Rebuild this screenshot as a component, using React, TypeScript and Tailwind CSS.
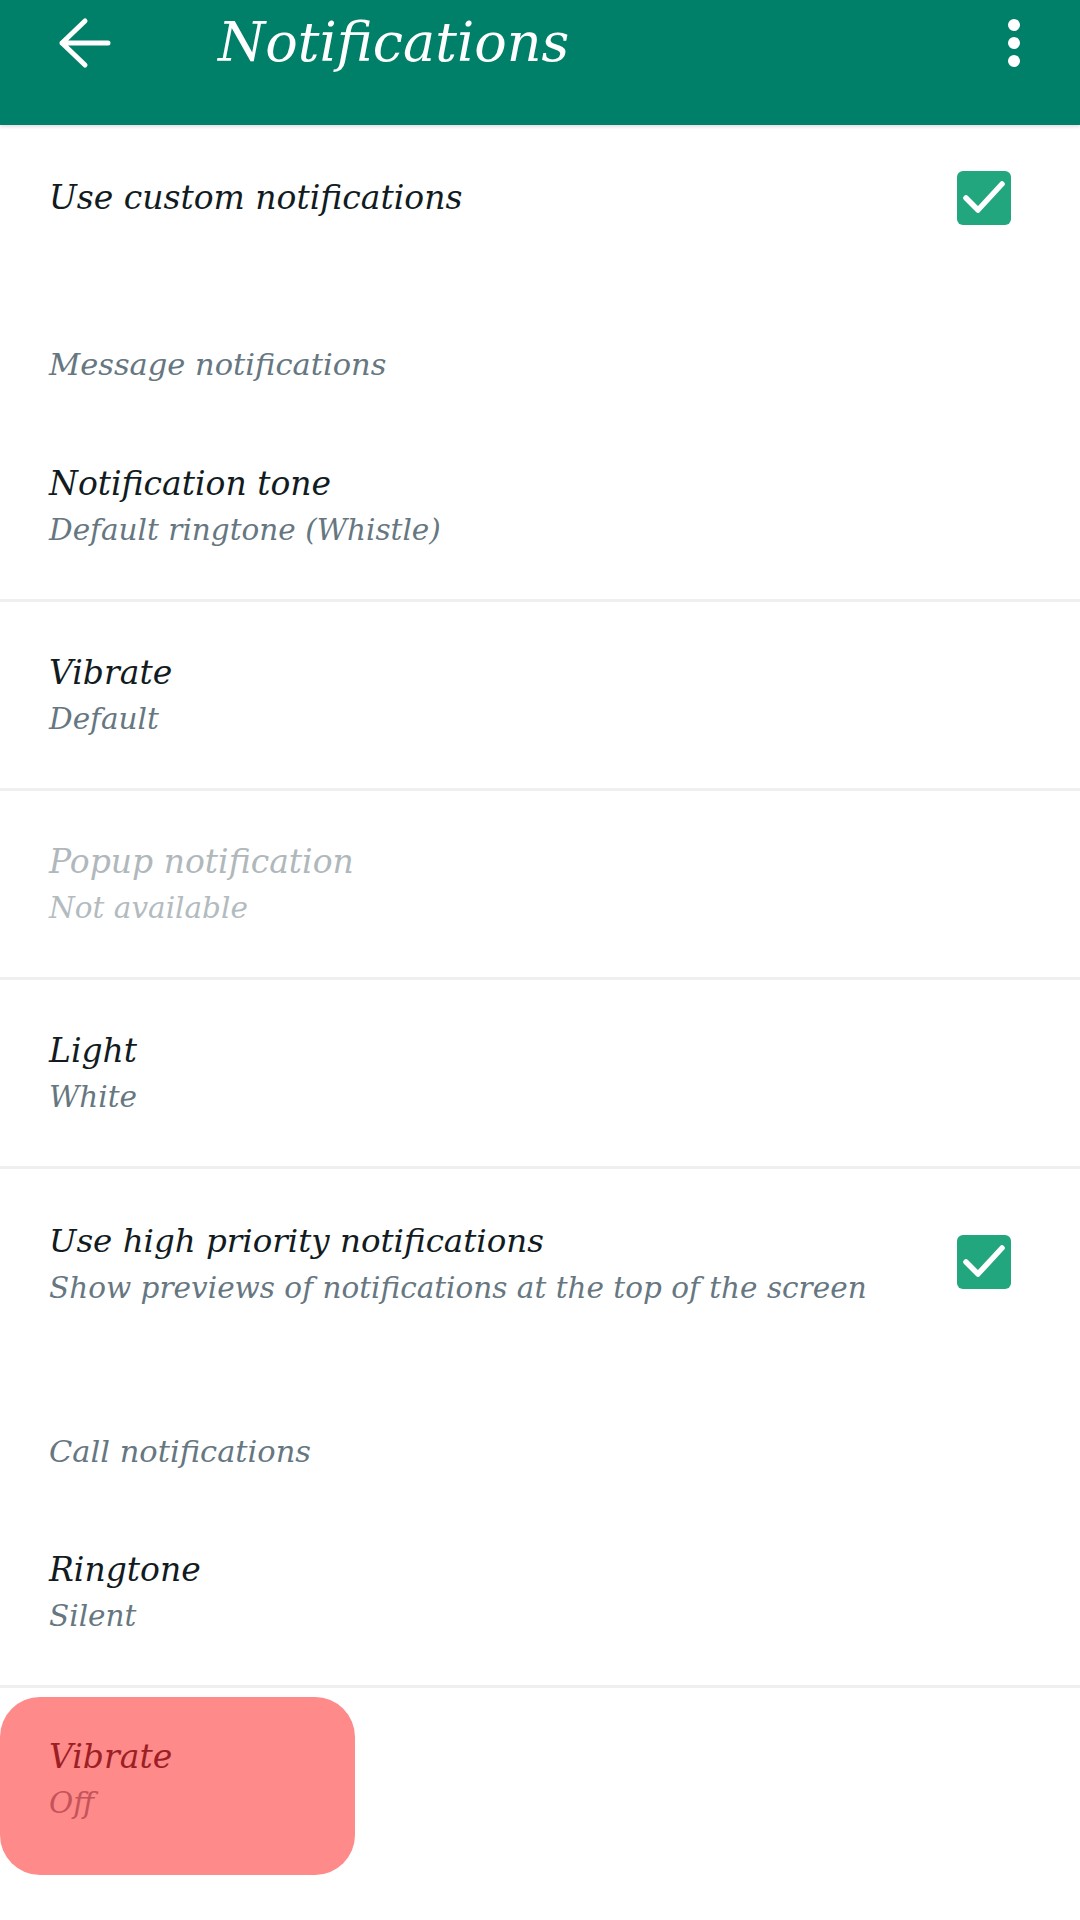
import React from "react";

const serif = "font-['DejaVu_Serif','Noto_Serif',serif] italic";

interface Pref {
    title: string;
    sub: string;
    disabled?: boolean;
}

const toneRows: Pref[] = [
    { title: "Notification tone", sub: "Default ringtone (Whistle)" },
    { title: "Vibrate", sub: "Default" },
    { title: "Popup notification", sub: "Not available", disabled: true },
    { title: "Light", sub: "White" },
];

function CheckBox(): JSX.Element {
    return (
        <div className="w-[54px] h-[54px] rounded-[6px] bg-[#21a67e] flex items-center justify-center">
            <svg width="54" height="54" viewBox="0 0 54 54" fill="none">
                <path d="M9 27 L21 39 L45 13" stroke="#ffffff" strokeWidth="5.5" strokeLinecap="round" strokeLinejoin="round" />
            </svg>
        </div>
    );
}

function Divider(): JSX.Element {
    return <div className="h-[3px] w-full bg-[#eef0f0]" />;
}

function PrefRow({ title, sub, disabled }: Pref): JSX.Element {
    return (
        <div className="h-[186px] pl-[49px] pt-[49px] flex flex-col">
            <div className={`text-[33px] leading-[44px] ${disabled ? "text-[#b0b8bc]" : "text-[#111b21]"}`}>
                {title}
            </div>
            <div className={`mt-[2px] text-[29.5px] leading-[44px] ${disabled ? "text-[#b3bbbf]" : "text-[#667781]"}`}>
                {sub}
            </div>
        </div>
    );
}

export default function App(): JSX.Element {
    return (
        <div className={`w-[1080px] h-[1920px] bg-white overflow-hidden ${serif}`}>
            {/* Toolbar */}
            <div className="h-[125px] bg-[#008069] shadow-[0_2px_3px_rgba(0,0,0,0.12)]">
                <div className="h-[86px] flex items-center">
                    <div className="w-[218px] pl-[56px] flex items-center">
                        <svg width="56" height="54" viewBox="0 0 56 54" fill="none">
                            <path d="M29 5 L6 27 L29 49 M6 27 H52" stroke="#ffffff" strokeWidth="5" strokeLinecap="round" strokeLinejoin="round" />
                        </svg>
                    </div>
                    <div className="flex-1 text-white text-[54px] leading-[64px]">Notifications</div>
                    <div className="w-[67px] flex flex-col items-center gap-[6px] mr-[33px]">
                        <span className="w-[12px] h-[12px] rounded-full bg-white" />
                        <span className="w-[12px] h-[12px] rounded-full bg-white" />
                        <span className="w-[12px] h-[12px] rounded-full bg-white" />
                    </div>
                </div>
            </div>

            {/* Use custom notifications */}
            <div className="h-[165px] pl-[49px] pr-[69px] flex items-start justify-between">
                <div className="pt-[51px] text-[33px] leading-[44px] text-[#111b21]">Use custom notifications</div>
                <div className="pt-[46px]">
                    <CheckBox />
                </div>
            </div>

            {/* Message notifications */}
            <div className="h-[123px] pl-[49px] pt-[53px] text-[30.5px] leading-[44px] text-[#667781]">
                Message notifications
            </div>

            {toneRows.map((r) => (
                <div key={r.title}>
                    <PrefRow {...r} />
                    <Divider />
                </div>
            ))}

            {/* High priority */}
            <div className="h-[207px] pl-[49px] pr-[69px] flex items-start justify-between">
                <div className="pt-[50px] flex flex-col">
                    <div className="text-[32.5px] leading-[44px] text-[#111b21]">Use high priority notifications</div>
                    <div className="mt-[3px] text-[29.5px] leading-[44px] text-[#667781]">
                        Show previews of notifications at the top of the screen
                    </div>
                </div>
                <div className="pt-[66px]">
                    <CheckBox />
                </div>
            </div>

            {/* Call notifications */}
            <div className="h-[123px] pl-[49px] pt-[54px] text-[30.5px] leading-[44px] text-[#667781]">
                Call notifications
            </div>

            <PrefRow title="Ringtone" sub="Silent" />
            <Divider />

            {/* Vibrate (highlighted) */}
            <div className="pt-[9px]">
                <div className="w-[355px] h-[178px] rounded-[40px] bg-[#ff8a8a] pl-[49px] pt-[38px] flex flex-col">
                    <div className="text-[33px] leading-[44px] text-[#9b1f24]">Vibrate</div>
                    <div className="mt-[2px] text-[29.5px] leading-[44px] text-[#c4545a]">Off</div>
                </div>
            </div>
        </div>
    );
}
